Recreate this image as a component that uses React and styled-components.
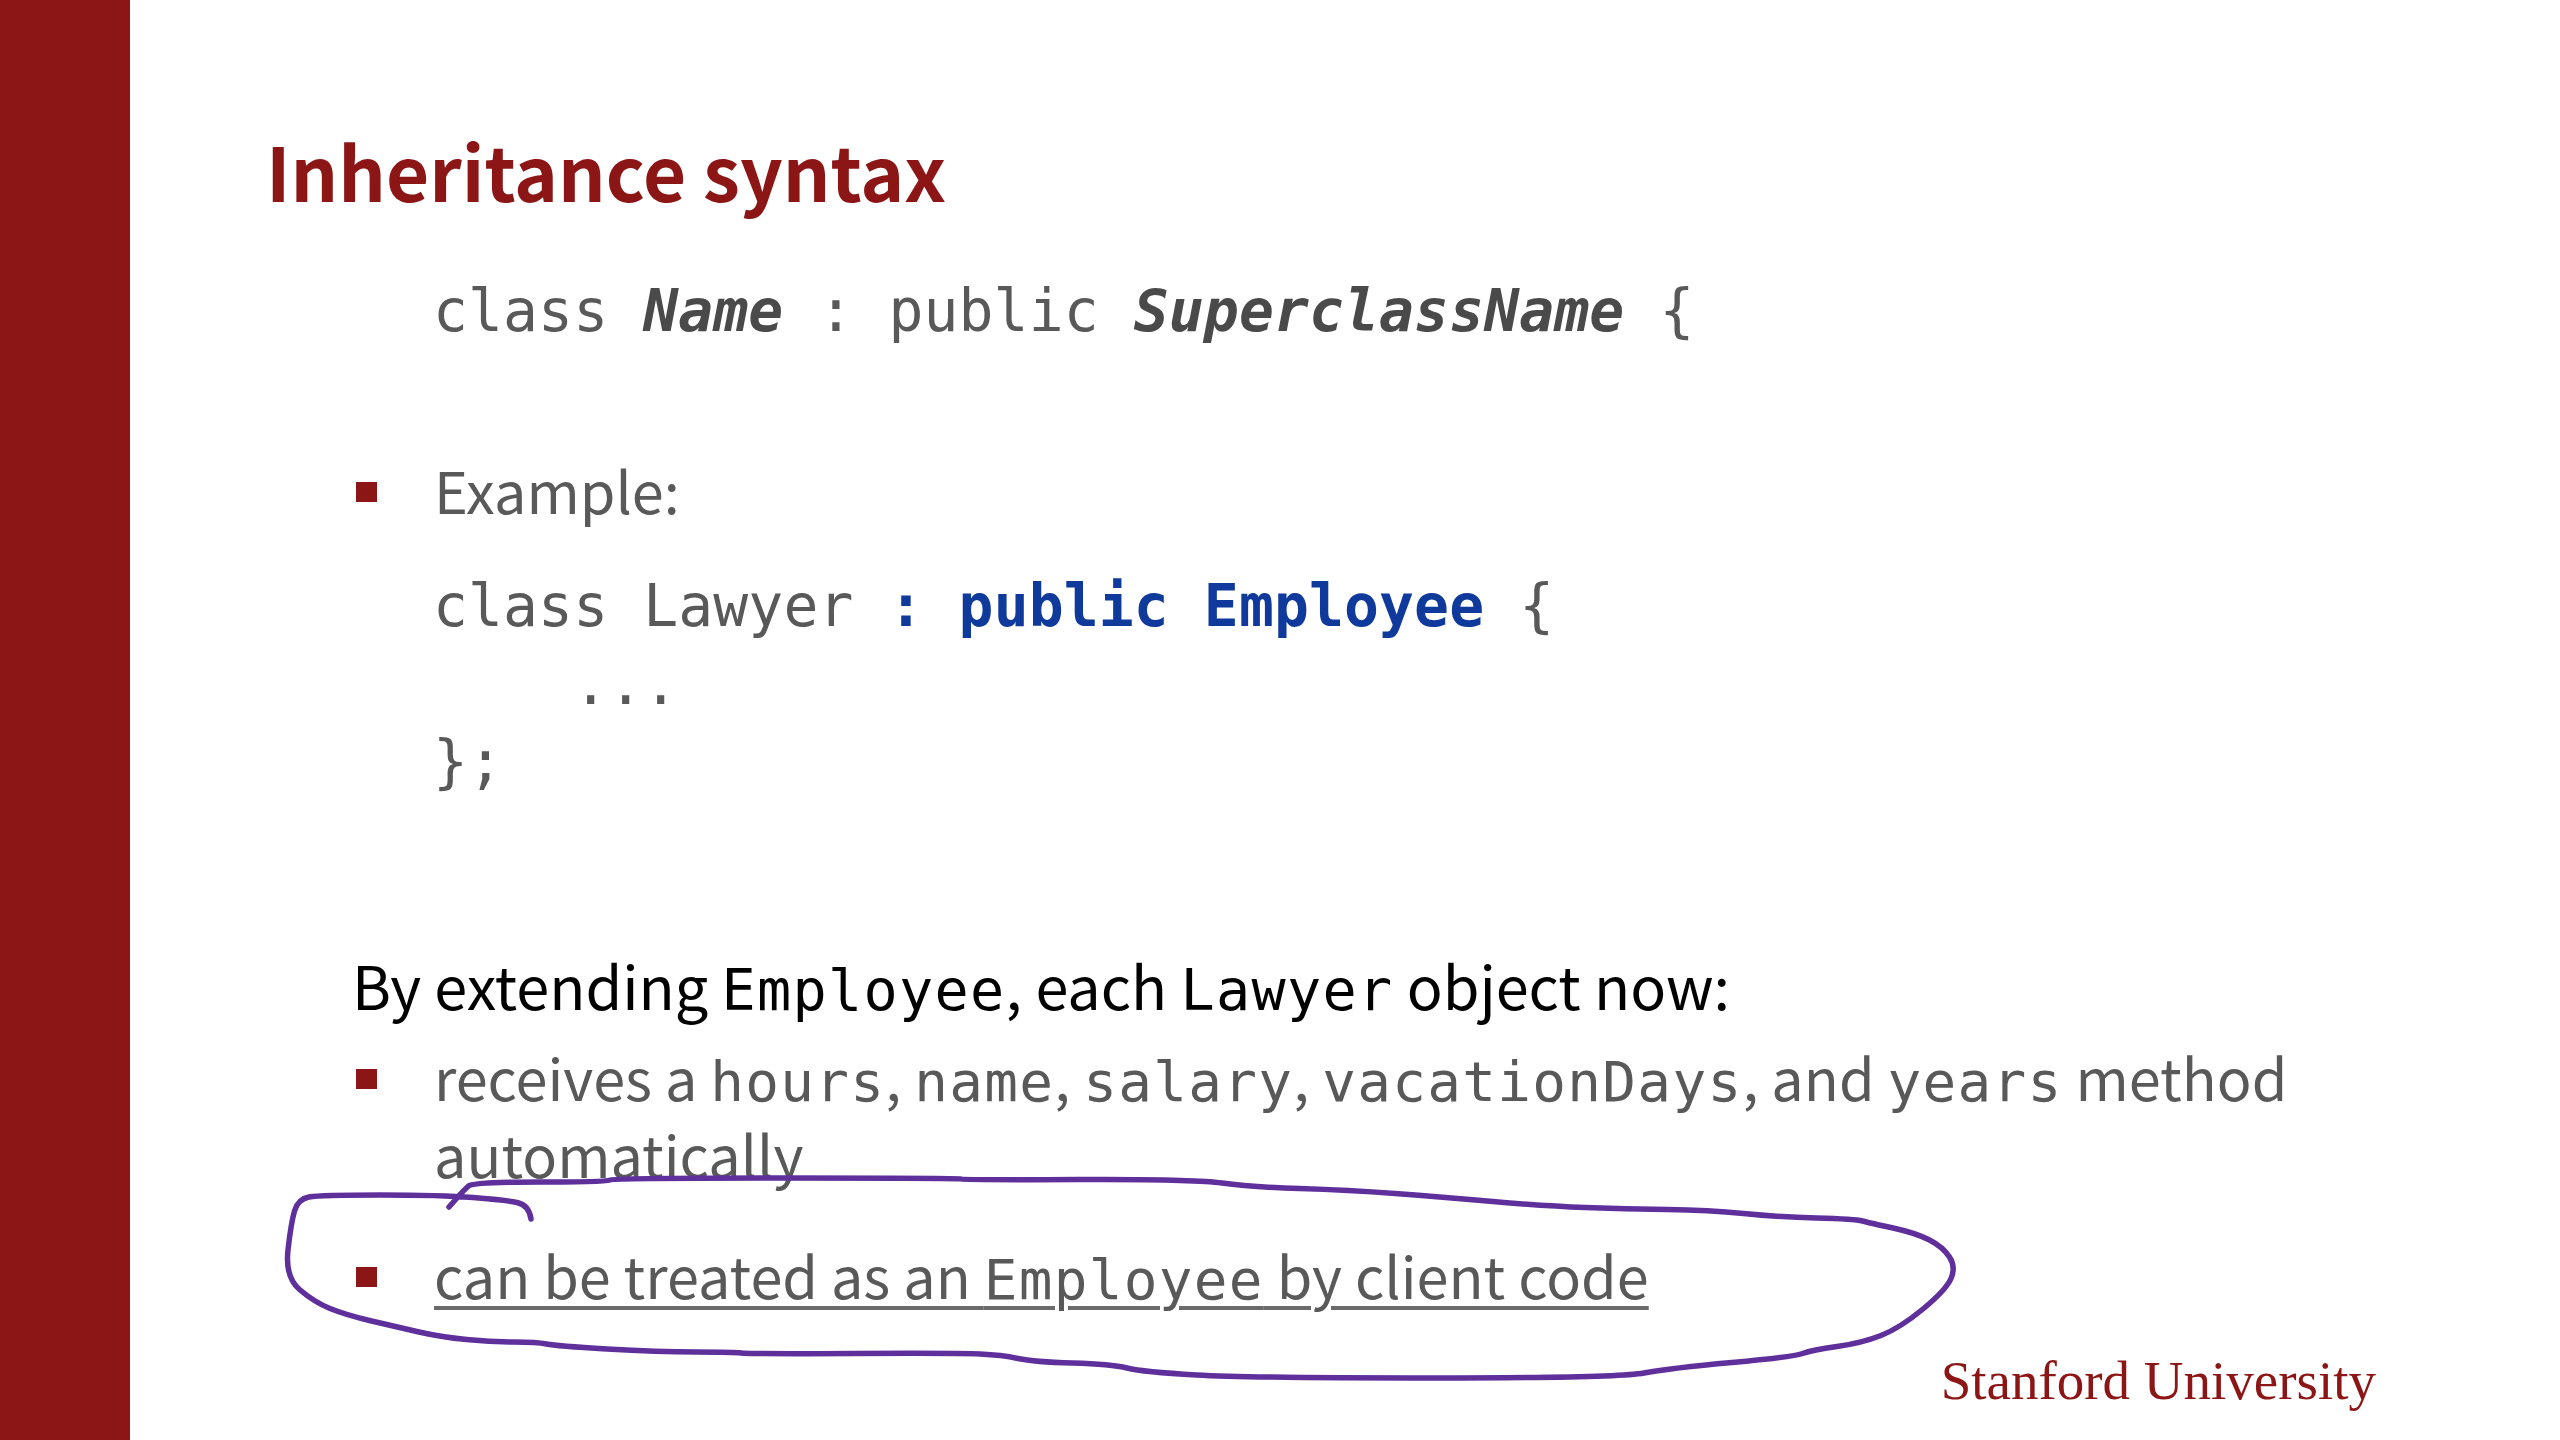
import React from "react";
import styled, { createGlobalStyle } from "styled-components";

const GlobalStyle = createGlobalStyle`
  html, body {
    margin: 0;
    padding: 0;
    background: #ffffff;
  }
`;

const Slide = styled.div`
  position: relative;
  display: flex;
  width: 2560px;
  height: 1440px;
  overflow: hidden;
  background: #ffffff;
  font-family: "Noto Sans CJK SC", "Noto Sans", sans-serif;
`;

const Sidebar = styled.div`
  flex: none;
  width: 130px;
  background: #8c1515;
`;

const Main = styled.div`
  flex: 1;
  display: flex;
  flex-direction: column;
  padding: 120px 0 0 136px;
  filter: blur(0.6px);
`;

const Title = styled.h1`
  margin: 0;
  font-size: 74.5px;
  line-height: 100px;
  font-weight: 700;
  color: #8c1515;
`;

const Code = styled.span`
  font-family: "DejaVu Sans Mono", monospace;
  font-size: ${({ $lead }) => ($lead ? "56.8px" : "56px")};
  line-height: 1;
  letter-spacing: 1.3px;
`;

const Em = styled.span`
  font-weight: 700;
  font-style: italic;
  color: #4a4a4a;
`;

const Blue = styled.span`
  font-weight: 700;
  color: #0f3a9c;
`;

const CodeLine = styled.div`
  margin-top: ${({ $top }) => $top || 0}px;
  padding-left: 167px;
  height: 78px;
  line-height: 78px;
  white-space: pre;
  color: #595959;
  font-family: "DejaVu Sans Mono", monospace;
  font-size: 58px;
  letter-spacing: 0.12px;
`;

const Lead = styled.div`
  margin-top: 145px;
  padding-left: 86px;
  line-height: 76px;
  font-size: 59.4px;
  color: #000000;
  white-space: nowrap;
`;

const Bullet = styled.div`
  display: flex;
  margin-top: ${({ $top }) => $top || 0}px;
  width: 2130px;
  padding-left: 87px;
  line-height: 77px;
  font-size: 57.6px;
  color: #595959;
`;

const Marker = styled.span`
  flex: none;
  width: 21px;
  height: 20px;
  margin: 31px 57px 0 3px;
  background: #8c1515;
`;

const Underlined = styled.span`
  text-decoration: underline;
  text-decoration-thickness: 4px;
  text-decoration-color: #6a6a6a;
  text-underline-offset: 7px;
`;

const Footer = styled.div`
  margin-top: auto;
  align-self: flex-end;
  margin-right: 184px;
  margin-bottom: 32px;
  font-family: "Liberation Serif", serif;
  font-size: 55px;
  line-height: 54px;
  color: #8c1515;
`;

const Scribble = styled.svg`
  position: absolute;
  left: 0;
  top: 0;
  pointer-events: none;
`;

const scribblePoints = [
  [531, 1219], [529, 1205], [505, 1200], [441, 1195], [320, 1195], [298, 1199], [291, 1223], [285, 1277],
  [314, 1302], [346, 1315], [397, 1327], [441, 1337], [492, 1342], [537, 1342], [556, 1346], [658, 1352],
  [735, 1352], [747, 1354], [958, 1353], [1002, 1355], [1034, 1362], [1111, 1364], [1143, 1372], [1250, 1378],
  [1617, 1378], [1671, 1368], [1793, 1357], [1812, 1350], [1862, 1343], [1900, 1328], [1946, 1290], [1956, 1267],
  [1943, 1247], [1916, 1233], [1870, 1223], [1855, 1219], [1778, 1217], [1709, 1210], [1625, 1209], [1545, 1206],
  [1441, 1197], [1349, 1190], [1250, 1187], [1194, 1179], [964, 1180], [958, 1178], [613, 1178], [607, 1182],
  [473, 1182], [464, 1190], [449, 1207],
];

// smooth the pen stroke through the midpoints of the sampled points
function smoothPath(points) {
  let d = `M${points[0][0]} ${points[0][1]}`;
  for (let i = 1; i < points.length - 1; i++) {
    const [x, y] = points[i];
    const [nx, ny] = points[i + 1];
    d += ` Q${x} ${y} ${(x + nx) / 2} ${(y + ny) / 2}`;
  }
  const last = points[points.length - 1];
  return `${d} L${last[0]} ${last[1]}`;
}

function App() {
  return (
    <Slide>
      <GlobalStyle />
      <Sidebar />
      <Main>
        <Title>Inheritance syntax</Title>
        <CodeLine $top={52}>
          class <Em>Name</Em> : public <Em>SuperclassName</Em> {"{"}
        </CodeLine>
        <Bullet $top={101}>
          <Marker />
          <span>Example:</span>
        </Bullet>
        <CodeLine $top={39}>
          class Lawyer <Blue>: public Employee</Blue> {"{"}
        </CodeLine>
        <CodeLine>{"    ..."}</CodeLine>
        <CodeLine>{"};"}</CodeLine>
        <Lead>
          By extending <Code $lead>Employee</Code>, each <Code $lead>Lawyer</Code> object now:
        </Lead>
        <Bullet $top={16}>
          <Marker />
          <span>
            receives a <Code>hours</Code>, <Code>name</Code>, <Code>salary</Code>,{" "}
            <Code>vacationDays</Code>, and <Code>years</Code> method automatically
          </span>
        </Bullet>
        <Bullet $top={44}>
          <Marker />
          <Underlined>
            can be treated as an <Code>Employee</Code> by client code
          </Underlined>
        </Bullet>
        <Footer>Stanford University</Footer>
      </Main>
      <Scribble width="2560" height="1440" viewBox="0 0 2560 1440" fill="none">
        <path d={smoothPath(scribblePoints)} stroke="#5f2f9b" strokeWidth="5.5" strokeLinejoin="round" strokeLinecap="round" />
      </Scribble>
    </Slide>
  );
}

export default App;
